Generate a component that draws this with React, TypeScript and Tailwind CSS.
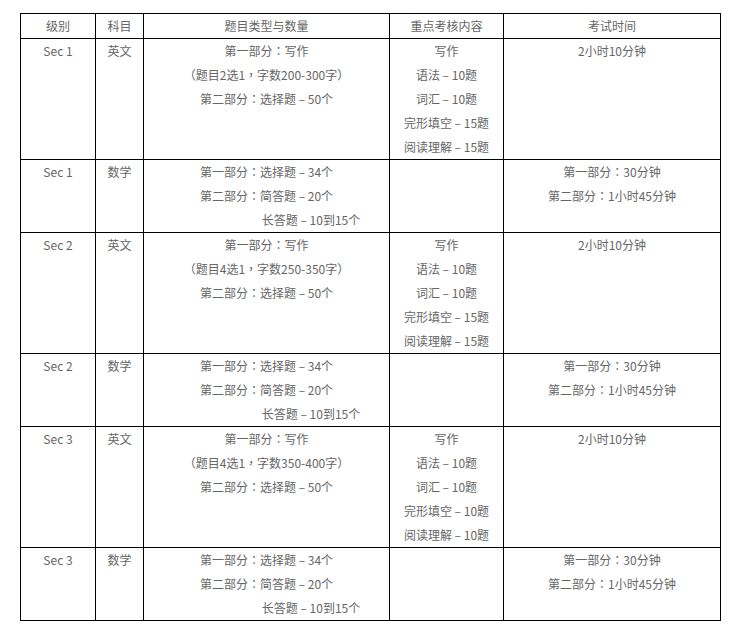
type Row = {
  level: string;
  subject: string;
  types: string[];
  indentLast?: boolean;
  focus: string[];
  time: string[];
};

const english = (words: string, focusTail: string): Omit<Row, "level"> => ({
  subject: "英文",
  types: ["第一部分：写作", words, "第二部分：选择题 – 50个"],
  focus: ["写作", "语法 – 10题", "词汇 – 10题", `完形填空 – ${focusTail}题`, `阅读理解 – ${focusTail}题`],
  time: ["2小时10分钟"],
});

const maths: Omit<Row, "level"> = {
  subject: "数学",
  types: ["第一部分：选择题 – 34个", "第二部分：简答题 – 20个", "长答题 – 10到15个"],
  indentLast: true,
  focus: [],
  time: ["第一部分：30分钟", "第二部分：1小时45分钟"],
};

const rows: Row[] = [
  { level: "Sec 1", ...english("（题目2选1，字数200-300字）", "15") },
  { level: "Sec 1", ...maths },
  { level: "Sec 2", ...english("（题目4选1，字数250-350字）", "15") },
  { level: "Sec 2", ...maths },
  { level: "Sec 3", ...english("（题目4选1，字数350-400字）", "10") },
  { level: "Sec 3", ...maths },
];

const cell = "border border-black align-top p-0 text-center font-normal";

// full-width punctuation sits centred in its box in the original
const Text = ({ value }: { value: string }) => (
  <>
    {value.split(/([：，（）])/).map((part, i) =>
      /^[：，（）]$/.test(part) ? (
        <span key={i} className="font-['Noto_Sans_CJK_TC',sans-serif]">
          {part}
        </span>
      ) : (
        part
      )
    )}
  </>
);

const Lines = ({ items, indentLast }: { items: string[]; indentLast?: boolean }) => (
  <>
    {items.map((t, i) => (
      <div key={i} className={indentLast && i === items.length - 1 ? "pl-[89px]" : ""}>
        <Text value={t} />
      </div>
    ))}
  </>
);

export default function App() {
  return (
    <div
      className="bg-white pt-[13px] pl-[20px] text-[12px] leading-[24px] text-[#666]"
      style={{ fontFamily: '"Microsoft YaHei", "Noto Sans CJK SC", "Noto Sans", sans-serif' }}
    >
      <table className="table-fixed border-collapse w-[700px]">
        <thead>
          <tr>
            <th className={`${cell} w-[75px]`}>级别</th>
            <th className={`${cell} w-[48px]`}>科目</th>
            <th className={`${cell} w-[246px]`}>题目类型与数量</th>
            <th className={`${cell} w-[114px]`}>重点考核内容</th>
            <th className={`${cell} w-[217px]`}>考试时间</th>
          </tr>
        </thead>
        <tbody>
          {rows.map((r, i) => (
            <tr key={i}>
              <td className={cell}>{r.level}</td>
              <td className={cell}>{r.subject}</td>
              <td className={cell}>
                <Lines items={r.types} indentLast={r.indentLast} />
              </td>
              <td className={cell}>
                <Lines items={r.focus} />
              </td>
              <td className={cell}>
                <Lines items={r.time} />
              </td>
            </tr>
          ))}
        </tbody>
      </table>
    </div>
  );
}
